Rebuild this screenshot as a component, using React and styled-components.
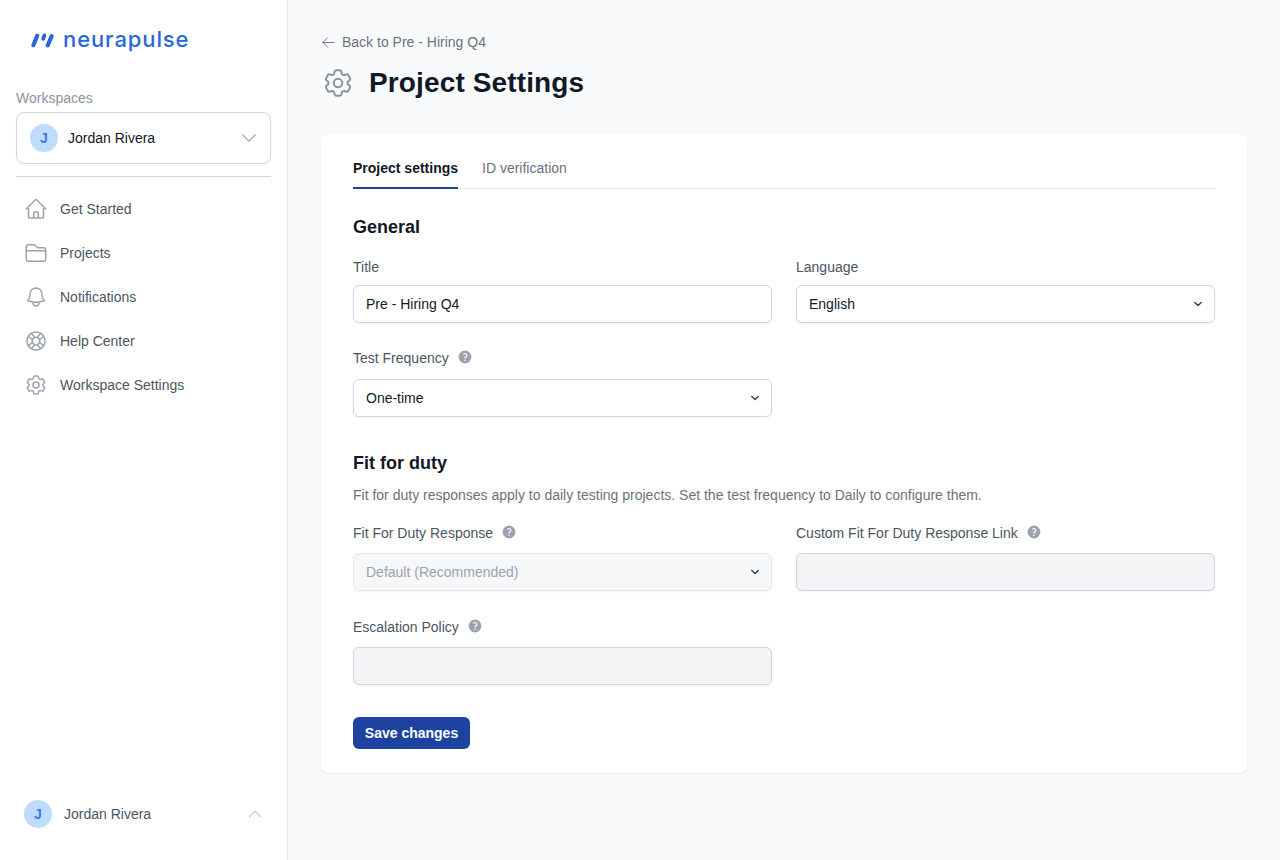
import React from "react";
import styled, { createGlobalStyle } from "styled-components";

const FONT = `"Liberation Sans", Arial, sans-serif`;

const Global = createGlobalStyle`
  html, body { margin: 0; padding: 0; height: 100%; }
  body { font-family: ${FONT}; background: #f9fafb; color: #111827; -webkit-font-smoothing: antialiased; }
  * { box-sizing: border-box; }
`;

const Page = styled.div`
  display: flex;
  height: 860px;
  overflow: hidden;
`;
const Sidebar = styled.aside`
  width: 288px;
  flex: none;
  background: #fff;
  border-right: 1px solid #e5e7eb;
  padding: 0 16px;
  display: flex;
  flex-direction: column;
`;
const Logo = styled.div`
  display: flex;
  align-items: center;
  gap: 9px;
  height: 24px;
  margin: 28px 0 0 14px;
`;
const LogoText = styled.span`
  font-family: Inter, sans-serif;
  font-size: 22px;
  font-weight: 500;
  letter-spacing: 0.9px;
  color: #2a66dc;
  line-height: 24px;
  position: relative;
  top: -1px;
`;
const SideLabel = styled.div`
  margin-top: 37px;
  font-size: 14px;
  line-height: 18px;
  color: #8a94a3;
`;
const WorkspaceBox = styled.div`
  margin-top: 5px;
  height: 52px;
  border: 1px solid #d1d5db;
  border-radius: 8px;
  box-shadow: 0 1px 2px rgba(0,0,0,.05);
  padding: 0 11px 0 13px;
  display: flex;
  align-items: center;
`;
const Avatar = styled.div`
  width: 28px;
  height: 28px;
  flex: none;
  border-radius: 50%;
  background: #bfdbfe;
  color: #3b78e7;
  font-size: 14px;
  font-weight: 700;
  display: flex;
  align-items: center;
  justify-content: center;
`;
const WorkspaceName = styled.span`
  margin-left: 10px;
  flex: 1;
  font-size: 14px;
  color: #111827;
`;
const Divider = styled.div`
  margin-top: 12px;
  height: 1px;
  background: #d1d5db;
`;
const Nav = styled.nav`
  margin-top: 10px;
  display: flex;
  flex-direction: column;
`;
const NavItem = styled.a`
  height: 44px;
  padding-left: 8px;
  display: flex;
  align-items: center;
  gap: 12px;
  font-size: 14px;
  color: #4b5563;
  text-decoration: none;
`;
const Footer = styled.div`
  margin-top: auto;
  height: 92px;
  padding: 0 7px 0 8px;
  display: flex;
  align-items: flex-start;
`;
const FooterRow = styled.div`
  width: 100%;
  margin-top: 32px;
  display: flex;
  align-items: center;
`;
const FooterName = styled.span`
  margin-left: 12px;
  flex: 1;
  font-size: 14px;
  color: #4b5563;
`;
const Main = styled.main`
  flex: 1;
  padding: 32px 33px 0;
  min-width: 0;
`;
const Back = styled.a`
  display: flex;
  align-items: center;
  gap: 6px;
  height: 20px;
  font-size: 14px;
  color: #6b7280;
  text-decoration: none;
`;
const TitleRow = styled.div`
  margin-top: 9px;
  height: 44px;
  display: flex;
  align-items: center;
  gap: 14px;
`;
const Title = styled.h1`
  margin: 0;
  font-size: 28px;
  line-height: 36px;
  font-weight: 700;
  letter-spacing: 0.13px;
  color: #111827;
`;
const Card = styled.section`
  margin-top: 29px;
  height: 639px;
  background: #fff;
  border-radius: 8px;
  box-shadow: 0 1px 3px rgba(0,0,0,.08);
  padding: 20px 32px 24px;
`;
const Tabs = styled.div`
  display: flex;
  gap: 24px;
  height: 35px;
  border-bottom: 1px solid #e5e7eb;
`;
const Tab = styled.div`
  height: 35px;
  padding-top: 5px;
  font-size: 14px;
  line-height: 18px;
  font-weight: ${p => (p.$active ? 700 : 400)};
  color: ${p => (p.$active ? "#111827" : "#6b7280")};
  border-bottom: 2px solid ${p => (p.$active ? "#1e429f" : "transparent")};
`;
const SectionTitle = styled.h2`
  margin: ${p => p.$top}px 0 0;
  font-size: 18px;
  line-height: 24px;
  font-weight: 700;
  color: #111827;
`;
const Description = styled.p`
  margin: 11px 0 0;
  font-size: 14px;
  line-height: 18px;
  color: #6b7280;
`;
const Grid = styled.div`
  display: grid;
  grid-template-columns: 419px 419px;
  column-gap: 24px;
  row-gap: ${p => p.$gap}px;
  margin-top: ${p => p.$top}px;
`;
const Field = styled.div`
  display: flex;
  flex-direction: column;
  min-width: 0;
`;
const Label = styled.label`
  display: flex;
  align-items: center;
  gap: 8px;
  height: 20px;
  font-size: 14px;
  color: #4b5563;
  margin-bottom: ${p => p.$below ?? 8}px;
`;
const Input = styled.input`
  width: 100%;
  height: 38px;
  padding: 0 12px;
  border: 1px solid #d1d5db;
  border-radius: 6px;
  box-shadow: 0 1px 2px rgba(0,0,0,.05);
  background: ${p => (p.disabled ? "#f3f4f6" : "#fff")};
  font: 400 14px ${FONT};
  color: #111827;
  outline: none;
`;
const SelectWrap = styled.div`
  position: relative;
  height: 38px;
`;
const Select = styled.select`
  appearance: none;
  width: 100%;
  height: 38px;
  padding: 0 32px 0 12px;
  border: 1px solid ${p => (p.disabled ? "#e5e7eb" : "#d1d5db")};
  border-radius: 6px;
  box-shadow: 0 1px 2px rgba(0,0,0,.05);
  background: ${p => (p.disabled ? "#f6f7f9" : "#fff")};
  font: 400 14px ${FONT};
  color: ${p => (p.disabled ? "#9ca3af" : "#111827")};
  opacity: 1;
  outline: none;
`;
const Caret = styled.svg`
  position: absolute;
  right: 9px;
  top: 11px;
  width: 16px;
  height: 16px;
  pointer-events: none;
`;
const Save = styled.button`
  margin-top: 32px;
  display: block;
  height: 32px;
  width: 117px;
  padding: 0;
  border: 0;
  border-radius: 6px;
  background: #1e429f;
  color: #fff;
  font: 700 14px ${FONT};
`;

const P = {
  home: "m2.25 12 8.954-8.955c.44-.439 1.152-.439 1.591 0L21.75 12M4.5 9.75v10.125c0 .621.504 1.125 1.125 1.125H9.75v-4.875c0-.621.504-1.125 1.125-1.125h2.25c.621 0 1.125.504 1.125 1.125V21h4.125c.621 0 1.125-.504 1.125-1.125V9.75M8.25 21h8.25",
  folder: "M2.25 12.75V12A2.25 2.25 0 0 1 4.5 9.75h15A2.25 2.25 0 0 1 21.75 12v.75m-8.69-6.44-2.12-2.12a1.5 1.5 0 0 0-1.061-.44H4.5A2.25 2.25 0 0 0 2.25 6v12a2.25 2.25 0 0 0 2.25 2.25h15A2.25 2.25 0 0 0 21.75 18V9a2.25 2.25 0 0 0-2.25-2.25h-5.379a1.5 1.5 0 0 1-1.06-.44Z",
  bell: "M14.857 17.082a23.848 23.848 0 0 0 5.454-1.31A8.967 8.967 0 0 1 18 9.75V9A6 6 0 0 0 6 9v.75a8.967 8.967 0 0 1-2.312 6.022c1.733.64 3.56 1.085 5.455 1.31m5.714 0a24.255 24.255 0 0 1-5.714 0m5.714 0a3 3 0 1 1-5.714 0",
  help: "M16.712 4.33a9.027 9.027 0 0 1 1.652 1.306c.51.51.944 1.064 1.306 1.652M16.712 4.33l-3.448 4.138m3.448-4.138a9.014 9.014 0 0 0-9.424 0M19.67 7.288l-4.138 3.448m4.138-3.448a9.014 9.014 0 0 1 0 9.424m-4.138-5.976a3.736 3.736 0 0 0-.88-1.388 3.737 3.737 0 0 0-1.388-.88m2.268 2.268a3.765 3.765 0 0 1 0 2.528m-2.268-4.796a3.765 3.765 0 0 0-2.528 0m4.796 4.796c-.181.506-.475.982-.88 1.388a3.736 3.736 0 0 1-1.388.88m2.268-2.268 4.138 3.448m0 0a9.027 9.027 0 0 1-1.306 1.652c-.51.51-1.064.944-1.652 1.306m0 0-3.448-4.138m3.448 4.138a9.014 9.014 0 0 1-9.424 0m5.976-4.138a3.765 3.765 0 0 1-2.528 0m0 0a3.736 3.736 0 0 1-1.388-.88 3.737 3.737 0 0 1-.88-1.388m2.268 2.268L7.288 19.67m0 0a9.024 9.024 0 0 1-1.652-1.306 9.027 9.027 0 0 1-1.306-1.652m0 0 4.138-3.448M4.33 16.712a9.014 9.014 0 0 1 0-9.424m4.138 5.976a3.765 3.765 0 0 1 0-2.528m0 0c.181-.506.475-.982.88-1.388a3.736 3.736 0 0 1 1.388-.88m-2.268 2.268L4.33 7.288m6.406 1.18L7.288 4.33m0 0a9.024 9.024 0 0 0-1.652 1.306A9.025 9.025 0 0 0 4.33 7.288",
  cog: "M9.594 3.94c.09-.542.56-.94 1.11-.94h2.593c.55 0 1.02.398 1.11.94l.213 1.281c.063.374.313.686.645.87.074.04.147.083.22.127.325.196.72.257 1.075.124l1.217-.456a1.125 1.125 0 0 1 1.37.49l1.296 2.247a1.125 1.125 0 0 1-.26 1.431l-1.003.827c-.293.241-.438.613-.43.992a7.723 7.723 0 0 1 0 .255c-.008.378.137.75.43.991l1.004.827c.424.35.534.955.26 1.43l-1.298 2.247a1.125 1.125 0 0 1-1.369.491l-1.217-.456c-.355-.133-.75-.072-1.076.124a6.47 6.47 0 0 1-.22.128c-.331.183-.581.495-.644.869l-.213 1.281c-.09.543-.56.94-1.11.94h-2.594c-.55 0-1.019-.398-1.11-.94l-.213-1.281c-.062-.374-.312-.686-.644-.87a6.52 6.52 0 0 1-.22-.127c-.325-.196-.72-.257-1.076-.124l-1.217.456a1.125 1.125 0 0 1-1.369-.49l-1.297-2.247a1.125 1.125 0 0 1 .26-1.431l1.004-.827c.292-.24.437-.613.43-.991a6.932 6.932 0 0 1 0-.255c.007-.38-.138-.751-.43-.992l-1.004-.827a1.125 1.125 0 0 1-.26-1.43l1.297-2.247a1.125 1.125 0 0 1 1.37-.491l1.216.456c.356.133.751.072 1.076-.124.072-.044.146-.086.22-.128.332-.183.582-.495.644-.869l.214-1.28Z M15 12a3 3 0 1 1-6 0 3 3 0 0 1 6 0Z",
};

const Outline = ({ d, size = 24, color = "#9ca3af", sw = 1.5 }) => (
  <svg width={size} height={size} viewBox="0 0 24 24" fill="none" stroke={color} strokeWidth={sw} strokeLinecap="round" strokeLinejoin="round" style={{ flex: "none" }}>
    <path d={d} />
  </svg>
);

const Help = () => (
  <svg width="16" height="16" viewBox="0 0 20 20" fill="#9ca3af" style={{ flex: "none", marginTop: -2 }}>
    <path fillRule="evenodd" clipRule="evenodd" d="M18 10a8 8 0 1 1-16 0 8 8 0 0 1 16 0ZM8.94 6.94a.75.75 0 1 1-1.061-1.061 3 3 0 1 1 2.871 5.026v.345a.75.75 0 0 1-1.5 0v-.5c0-.72.57-1.172 1.081-1.287A1.5 1.5 0 1 0 8.94 6.94ZM10 15a1 1 0 1 0 0-2 1 1 0 0 0 0 2Z" />
  </svg>
);

const LogoMark = () => (
  <svg width="24" height="18" viewBox="0 0 24 18" fill="none" stroke="#2a66dc" strokeLinecap="round" style={{ flex: "none" }}>
    <path d="M3.4 14.2 7.2 4.8" strokeWidth="4.2" />
    <path d="M14.4 4.4 13.2 7.8" strokeWidth="3.8" />
    <path d="M17.8 14.2 21.6 5.2" strokeWidth="4.2" />
  </svg>
);

const SelectField = ({ value, disabled }) => (
  <SelectWrap>
    <Select disabled={disabled} defaultValue={value}>
      <option>{value}</option>
    </Select>
    <Caret viewBox="0 0 20 20" fill="none" stroke="#374151" strokeWidth="1.8" strokeLinecap="round" strokeLinejoin="round">
      <path d="m6 8 4 4 4-4" />
    </Caret>
  </SelectWrap>
);

const nav = [
  ["home", "Get Started"],
  ["folder", "Projects"],
  ["bell", "Notifications"],
  ["help", "Help Center"],
  ["cog", "Workspace Settings"],
];

export default function App() {
  return (
    <Page>
      <Global />
      <Sidebar>
        <Logo>
          <LogoMark />
          <LogoText>neurapulse</LogoText>
        </Logo>
        <SideLabel>Workspaces</SideLabel>
        <WorkspaceBox>
          <Avatar>J</Avatar>
          <WorkspaceName>Jordan Rivera</WorkspaceName>
          <Outline d="m19.5 8.25-7.5 7.5-7.5-7.5" size={20} />
        </WorkspaceBox>
        <Divider />
        <Nav>
          {nav.map(([icon, label]) => (
            <NavItem key={label}>
              <Outline d={P[icon]} />
              {label}
            </NavItem>
          ))}
        </Nav>
        <Footer>
          <FooterRow>
            <Avatar>J</Avatar>
            <FooterName>Jordan Rivera</FooterName>
            <Outline d="m4.5 15.75 7.5-7.5 7.5 7.5" size={18} color="#c1c6ce" />
          </FooterRow>
        </Footer>
      </Sidebar>
      <Main>
        <Back>
          <Outline d="M10.5 19.5 3 12m0 0 7.5-7.5M3 12h18" size={15} color="#6b7280" />
          Back to Pre - Hiring Q4
        </Back>
        <TitleRow>
          <Outline d={P.cog} size={34} color="#8b93a0" sw={1.4} />
          <Title>Project Settings</Title>
        </TitleRow>
        <Card>
          <Tabs>
            <Tab $active>Project settings</Tab>
            <Tab>ID verification</Tab>
          </Tabs>
          <SectionTitle $top={26}>General</SectionTitle>
          <Grid $top={18} $gap={25}>
            <Field>
              <Label>Title</Label>
              <Input defaultValue="Pre - Hiring Q4" />
            </Field>
            <Field>
              <Label>Language</Label>
              <SelectField value="English" />
            </Field>
            <Field>
              <Label $below={11}>Test Frequency <Help /></Label>
              <SelectField value="One-time" />
            </Field>
          </Grid>
          <SectionTitle $top={34}>Fit for duty</SectionTitle>
          <Description>Fit for duty responses apply to daily testing projects. Set the test frequency to Daily to configure them.</Description>
          <Grid $top={19} $gap={26}>
            <Field>
              <Label $below={10}>Fit For Duty Response <Help /></Label>
              <SelectField value="Default (Recommended)" disabled />
            </Field>
            <Field>
              <Label $below={10}>Custom Fit For Duty Response Link <Help /></Label>
              <Input disabled />
            </Field>
            <Field>
              <Label $below={10}>Escalation Policy <Help /></Label>
              <Input disabled />
            </Field>
          </Grid>
          <Save>Save changes</Save>
        </Card>
      </Main>
    </Page>
  );
}
